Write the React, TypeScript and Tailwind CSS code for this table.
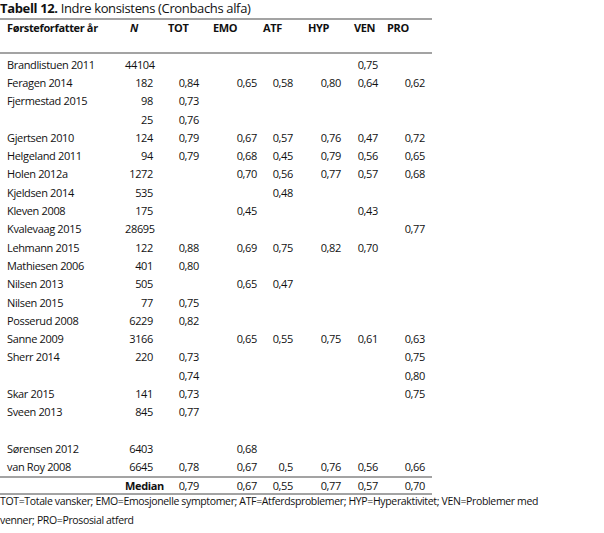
import React from 'react';

const cols = 'grid grid-cols-[125px_35px_46px_54px_40px_47px_36px_49px]';

// header cells: left aligned, each with its own inset
const headCls = [
  'pl-[7px]',
  'pl-[5px] italic',
  'pl-[8px]',
  'pl-[7px]',
  'pl-[3px]',
  'pl-[8px]',
  'pl-[7px]',
  'pl-[4px]',
];

// value cells: right aligned
const valCls = [
  'pl-[7px] text-left',
  'pr-[7px] text-right',
  'pr-[7px] text-right',
  'pr-[3px] text-right',
  'pr-[7px] text-right',
  'pr-[6px] text-right',
  'pr-[5px] text-right',
  'pr-[7px] text-right',
];

const headers = ['Førsteforfatter år', 'N', 'TOT', 'EMO', 'ATF', 'HYP', 'VEN', 'PRO'];

const rows: string[][] = [
  ['Brandlistuen 2011', '44104', '', '', '', '', '0,75', ''],
  ['Feragen 2014', '182', '0,84', '0,65', '0,58', '0,80', '0,64', '0,62'],
  ['Fjermestad 2015', '98', '0,73', '', '', '', '', ''],
  ['', '25', '0,76', '', '', '', '', ''],
  ['Gjertsen 2010', '124', '0,79', '0,67', '0,57', '0,76', '0,47', '0,72'],
  ['Helgeland 2011', '94', '0,79', '0,68', '0,45', '0,79', '0,56', '0,65'],
  ['Holen 2012a', '1272', '', '0,70', '0,56', '0,77', '0,57', '0,68'],
  ['Kjeldsen 2014', '535', '', '', '0,48', '', '', ''],
  ['Kleven 2008', '175', '', '0,45', '', '', '0,43', ''],
  ['Kvalevaag 2015', '28695', '', '', '', '', '', '0,77'],
  ['Lehmann 2015', '122', '0,88', '0,69', '0,75', '0,82', '0,70', ''],
  ['Mathiesen 2006', '401', '0,80', '', '', '', '', ''],
  ['Nilsen 2013', '505', '', '0,65', '0,47', '', '', ''],
  ['Nilsen 2015', '77', '0,75', '', '', '', '', ''],
  ['Posserud 2008', '6229', '0,82', '', '', '', '', ''],
  ['Sanne 2009', '3166', '', '0,65', '0,55', '0,75', '0,61', '0,63'],
  ['Sherr 2014', '220', '0,73', '', '', '', '', '0,75'],
  ['', '', '0,74', '', '', '', '', '0,80'],
  ['Skar 2015', '141', '0,73', '', '', '', '', '0,75'],
  ['Sveen 2013', '845', '0,77', '', '', '', '', ''],
  ['', '', '', '', '', '', '', ''],
  ['Sørensen 2012', '6403', '', '0,68', '', '', '', ''],
  ['van Roy 2008', '6645', '0,78', '0,67', '0,5', '0,76', '0,56', '0,66'],
];

const median = ['', 'Median', '0,79', '0,67', '0,55', '0,77', '0,57', '0,70'];

export default function App() {
  return (
    <div className="w-[604px] h-[533px] bg-white text-[#111] font-['Open_Sans','Noto_Sans',sans-serif]">
      <div className="h-[18px] text-[13px] leading-[16px] tracking-[-0.35px]">
        <span className="font-bold">Tabell 12.</span> Indre konsistens (Cronbachs alfa)
      </div>

      <div className="w-[432px] text-[11px] tracking-[-0.35px]">
        <div className={`${cols} h-[36px] border-y-2 border-[#a3a3a3] font-bold leading-[15px]`}>
          {headers.map((h, i) => (
            <div key={i} className={headCls[i]}>{h}</div>
          ))}
        </div>

        <div className="pt-[1px] border-b-2 border-[#a3a3a3]">
          {rows.map((r, ri) => (
            <div key={ri} className={`${cols} h-[18.3px] items-center leading-none`}>
              {r.map((c, ci) => (
                <div key={ci} className={valCls[ci]}>{c}</div>
              ))}
            </div>
          ))}
        </div>

        {/* median row */}
        <div className={`${cols} h-[17px] items-center leading-none border-b-2 border-[#a3a3a3]`}>
          {median.map((c, ci) => (
            <div key={ci} className={`${valCls[ci]} ${ci === 1 ? 'font-bold' : ''}`}>{c}</div>
          ))}
        </div>
      </div>

      <p className="w-[548px] -mt-[3px] text-[10.5px] leading-[19px] tracking-[-0.35px]">
        TOT=Totale vansker; EMO=Emosjonelle symptomer; ATF=Atferdsproblemer; HYP=Hyperaktivitet; VEN=Problemer med venner; PRO=Prososial atferd
      </p>
    </div>
  );
}
